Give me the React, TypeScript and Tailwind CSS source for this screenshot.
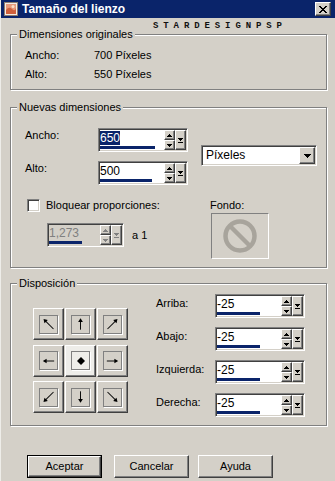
import React from "react";

const raised =
    "border border-t-white border-l-white border-r-[#404040] border-b-[#404040] shadow-[inset_-1px_-1px_0_#808080]";
const sunken =
    "border border-t-[#808080] border-l-[#808080] border-r-white border-b-white shadow-[inset_1px_1px_0_#404040,inset_-1px_-1px_0_#d4d0c8] p-[1px]";

function Tri({ up, color = "#000" }: { up?: boolean; color?: string }) {
    return (
        <svg width="5" height="3" viewBox="0 0 5 3" shapeRendering="crispEdges">
            <polygon points={up ? "2.5,0 5,3 0,3" : "0,0 5,0 2.5,3"} fill={color} />
        </svg>
    );
}

function SpinBox({
    value,
    bar,
    className,
    selected,
    disabled,
}: {
    value: string;
    bar: number;
    className: string;
    selected?: boolean;
    disabled?: boolean;
}) {
    const ink = disabled ? "#808080" : "#000";
    return (
        <div
            className={`${sunken} ${className} h-[24px] flex ${
                disabled ? "bg-[#d4d0c8]" : "bg-white"
            }`}
        >
            <div className="flex-1 flex flex-col justify-between">
                <div className="h-[14px] leading-[14px] text-[12px] mt-[1px]">
                    <span
                        className={
                            selected
                                ? "bg-[#0a246a] text-white"
                                : disabled
                                ? "text-[#808080]"
                                : "text-black"
                        }
                    >
                        {value}
                    </span>
                </div>
                <div className="h-[3px] bg-[#0a246a] mb-[1px]" style={{ width: bar }} />
            </div>
            <div className="w-[11px] flex flex-col">
                <div className={`${raised} h-[10px] bg-[#d4d0c8] flex items-center justify-center`}>
                    <Tri up color={ink} />
                </div>
                <div className={`${raised} h-[10px] bg-[#d4d0c8] flex items-center justify-center`}>
                    <Tri color={ink} />
                </div>
            </div>
            <div
                className={`${raised} w-[11px] bg-[#d4d0c8] flex flex-col items-center justify-center gap-[1px]`}
            >
                <Tri color={ink} />
                <div className="w-[5px] h-[1px]" style={{ background: ink }} />
            </div>
        </div>
    );
}

function GroupBox({
    label,
    className,
    children,
}: {
    label: string;
    className: string;
    children: React.ReactNode;
}) {
    return (
        <div
            className={`relative ml-[9px] w-[317px] border border-[#808080] shadow-[inset_1px_1px_0_#fff,1px_1px_0_#fff] ${className}`}
        >
            <span className="absolute left-[6px] top-[-8px] px-[2px] bg-[#d4d0c8] text-[11px] leading-[14px]">
                {label}
            </span>
            {children}
        </div>
    );
}

function Arrow({ rot, diag }: { rot: number; diag?: boolean }) {
    const h = diag ? 7.5 : 6;
    return (
        <svg width="18" height="18" viewBox="0 0 18 18">
            <g transform={`rotate(${rot} 9 9)`}>
                <line x1="9" y1={9 + h} x2="9" y2={9 - h + 2} stroke="#000" strokeWidth="1" />
                <polygon points={`9,${9 - h} 6.5,${9 - h + 4} 11.5,${9 - h + 4}`} fill="#000" />
            </g>
        </svg>
    );
}

function GridButton({ children, active }: { children: React.ReactNode; active?: boolean }) {
    return (
        <div
            className={`${raised} w-[31px] h-[32px] flex items-center justify-center ${
                active ? "bg-[#eeede9]" : "bg-[#d4d0c8]"
            }`}
        >
            <div className="w-[19px] h-[19px] border border-[#808080] shadow-[1px_1px_0_#fff] flex items-center justify-center">
                {children}
            </div>
        </div>
    );
}

function PushButton({ label, primary, className }: { label: string; primary?: boolean; className: string }) {
    return (
        <div className={`${className} w-[75px] h-[23px] ${primary ? "border border-black" : ""}`}>
            <div
                className={`${raised} h-full bg-[#d4d0c8] flex items-center justify-center text-[11px]`}
            >
                {label}
            </div>
        </div>
    );
}

export default function App() {
    const sides = [
        { label: "Arriba:" },
        { label: "Abajo:" },
        { label: "Izquierda:" },
        { label: "Derecha:" },
    ];
    return (
        <div className="w-[335px] h-[481px] bg-[#d4d0c8] overflow-hidden text-black font-['Liberation_Sans',Arial,sans-serif] border-l border-l-[#eeede9]">
            {/* Title bar */}
            <div className="h-[18px] bg-[#0a246a] flex items-center pl-[2px] pr-[4px]">
                <svg width="16" height="16" viewBox="0 0 16 16">
                    <rect x="1.5" y="1.5" width="13" height="13" fill="#f4ece4" stroke="#8c7c70" />
                    <rect x="3" y="3" width="10" height="10" fill="#e89a7c" />
                    <path d="M3 9 Q6 5 9 8 T13 7 V13 H3 Z" fill="#d0603c" />
                    <circle cx="10" cy="5.5" r="1.5" fill="#fbe0c8" />
                </svg>
                <span className="ml-[3px] text-white font-bold text-[12px] leading-[16px]">
                    Tamaño del lienzo
                </span>
                <div className={`${raised} ml-auto w-[16px] h-[14px] bg-[#d4d0c8] flex items-center justify-center`}>
                    <svg width="8" height="7" viewBox="0 0 8 7" shapeRendering="crispEdges">
                        <path d="M0.5 0 L7.5 7 M7.5 0 L0.5 7" stroke="#000" strokeWidth="1.6" />
                    </svg>
                </div>
            </div>

            {/* Watermark */}
            <div className="h-[16px] pl-[152px] pt-[4px] font-['Liberation_Mono',monospace] font-bold text-[9px] leading-[9px] tracking-[4.9px] text-[#111]">
                STARDESIGNPSP
            </div>

            {/* Dimensiones originales */}
            <GroupBox label="Dimensiones originales" className="h-[56px]">
                <div className="pt-[14px] pl-[14px] text-[11px] leading-[13px] flex flex-col gap-[6px]">
                    <div className="flex">
                        <span className="w-[69px]">Ancho:</span>
                        <span>700 Píxeles</span>
                    </div>
                    <div className="flex">
                        <span className="w-[69px]">Alto:</span>
                        <span>550 Píxeles</span>
                    </div>
                </div>
            </GroupBox>

            {/* Nuevas dimensiones */}
            <GroupBox label="Nuevas dimensiones" className="h-[161px] mt-[17px]">
                <div className="pt-[20px] text-[11px] leading-[13px]">
                    <div className="flex ml-[14px]">
                        <div className="w-[163px] flex flex-col gap-[9px]">
                            <div className="flex">
                                <span className="w-[73px] pt-[1px]">Ancho:</span>
                                <SpinBox value="650" bar={55} selected className="w-[90px]" />
                            </div>
                            <div className="flex">
                                <span className="w-[73px] pt-[1px]">Alto:</span>
                                <SpinBox value="500" bar={52} className="w-[90px]" />
                            </div>
                        </div>
                        <div
                            className={`${sunken} ml-[13px] mt-[17px] w-[116px] h-[21px] bg-white flex items-center`}
                        >
                            <span className="flex-1 pl-[3px] text-[12px]">Píxeles</span>
                            <div className={`${raised} w-[16px] h-full bg-[#d4d0c8] flex items-center justify-center`}>
                                <svg width="7" height="4" viewBox="0 0 7 4" shapeRendering="crispEdges">
                                    <polygon points="0,0 7,0 3.5,4" fill="#000" />
                                </svg>
                            </div>
                        </div>
                    </div>

                    <div className="flex mt-[14px]">
                        <div className="w-[199px]">
                            <div className="flex items-center ml-[16px] h-[13px]">
                                <div className={`${sunken} w-[13px] h-[13px] bg-white`} />
                                <span className="ml-[6px]">Bloquear proporciones:</span>
                            </div>
                            <div className="flex items-center ml-[36px] mt-[11px]">
                                <SpinBox value="1,273" bar={33} disabled className="w-[77px]" />
                                <span className="ml-[8px]">a 1</span>
                            </div>
                        </div>
                        <div>
                            <div className="h-[13px]">Fondo:</div>
                            <div className="mt-[1px] ml-[1px] w-[58px] h-[46px] border border-t-[#808080] border-l-[#808080] border-r-white border-b-white flex items-center justify-center">
                                <svg width="36" height="36" viewBox="0 0 36 36">
                                    <circle cx="18" cy="18" r="14.5" fill="none" stroke="#a8a49c" strokeWidth="4.5" />
                                    <line x1="8" y1="8" x2="28" y2="28" stroke="#a8a49c" strokeWidth="4.5" />
                                </svg>
                            </div>
                        </div>
                    </div>
                </div>
            </GroupBox>

            {/* Disposición */}
            <GroupBox label="Disposición" className="h-[143px] mt-[15px]">
                <div className="flex pt-[10px] text-[11px] leading-[13px]">
                    <div className="ml-[22px] mt-[14px] grid grid-cols-[31px_31px_31px] gap-[1px]">
                        <GridButton><Arrow rot={-45} diag /></GridButton>
                        <GridButton><Arrow rot={0} /></GridButton>
                        <GridButton><Arrow rot={45} diag /></GridButton>
                        <GridButton><Arrow rot={-90} /></GridButton>
                        <GridButton active>
                            <svg width="8" height="8" viewBox="0 0 8 8">
                                <polygon points="4,0 8,4 4,8 0,4" fill="#000" />
                            </svg>
                        </GridButton>
                        <GridButton><Arrow rot={90} /></GridButton>
                        <GridButton><Arrow rot={-135} diag /></GridButton>
                        <GridButton><Arrow rot={180} /></GridButton>
                        <GridButton><Arrow rot={135} diag /></GridButton>
                    </div>
                    <div className="ml-[28px] flex flex-col gap-[9px]">
                        {sides.map((s) => (
                            <div key={s.label} className="flex">
                                <span className="w-[59px] pt-[3px]">{s.label}</span>
                                <SpinBox value="-25" bar={43} className="w-[90px]" />
                            </div>
                        ))}
                    </div>
                </div>
            </GroupBox>

            {/* Buttons */}
            <div className="flex mt-[29px]">
                <PushButton label="Aceptar" primary className="ml-[26px]" />
                <PushButton label="Cancelar" className="ml-[12px]" />
                <PushButton label="Ayuda" className="ml-[9px]" />
            </div>
        </div>
    );
}
